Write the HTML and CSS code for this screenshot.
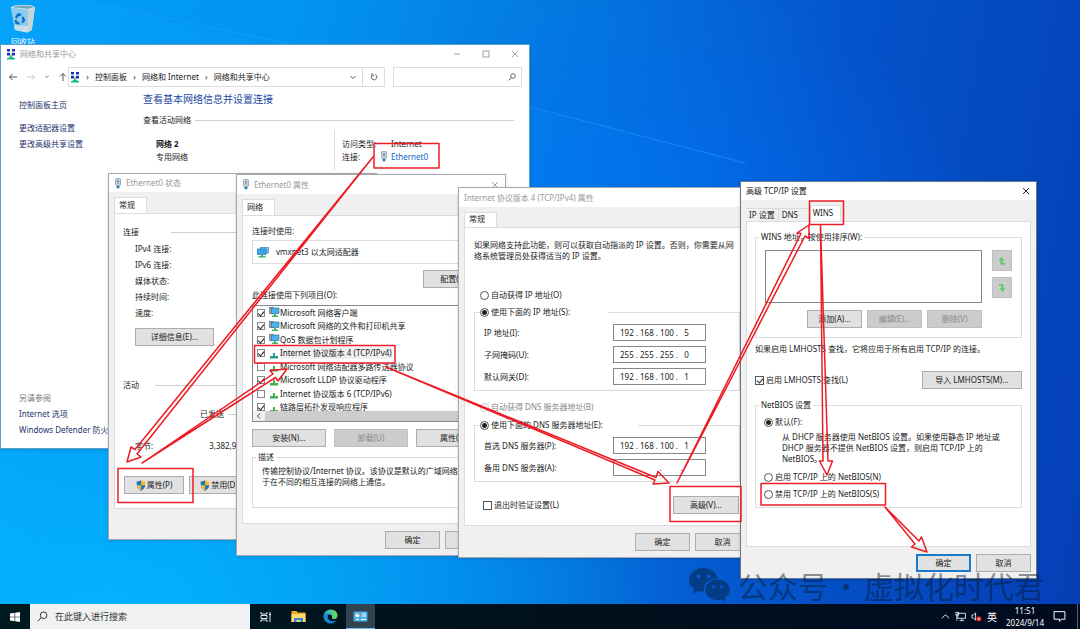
FILE: index.html
```html
<!DOCTYPE html>
<html lang="zh-CN">
<head>
<meta charset="utf-8">
<title>桌面</title>
<link rel="stylesheet" href="styles.css">
</head>
<body>
<svg class="defs" aria-hidden="true">
  <defs>
    <symbol id="i-center" viewBox="0 0 10 11">
      <g fill="#1c2fb0"><rect x="1" y="0" width="3" height="2.500"/><rect x="6" y="0" width="3" height="2.500"/><rect x="1" y="4" width="3" height="2.500"/><rect x="6" y="4" width="3" height="2.500"/></g>
      <g fill="#8fb0e8"><rect x="1" y="2.500" width="3" height="1"/><rect x="6" y="2.500" width="3" height="1"/></g>
      <path d="M5 5v4" stroke="#18b070" stroke-width="1"/><path d="M5 7l3 2h1v1.500H1V9h1z" fill="#18b978"/>
    </symbol>
    <symbol id="i-plug" viewBox="0 0 8 11">
      <rect x="1.500" y=".5" width="5" height="7" rx="1" fill="#c9d6e2" stroke="#8797a8" stroke-width=".8"/>
      <path d="M4 2v4M3 3h2" stroke="#5d7488" stroke-width=".8"/><path d="M2.500 8h3v1.500L4 10.800 2.500 9.500z" fill="#1686bd"/>
    </symbol>
    <symbol id="i-close" viewBox="0 0 8 8"><path d="M1 1l6 6M7 1L1 7" fill="none" stroke="currentColor" stroke-width=".9"/></symbol>
    <symbol id="i-pc" viewBox="0 0 12 11">
      <rect x="3.500" y=".5" width="8" height="5.500" fill="#6dc4f5" stroke="#3b7ea8" stroke-width=".7"/>
      <rect x=".5" y="2" width="8.500" height="5.500" fill="#35a7ee" stroke="#2672a6" stroke-width=".7"/>
      <path d="M4 7.500h2v1.500h2.500v1.500h-7V9H4z" fill="#3fb567"/>
    </symbol>
    <symbol id="i-client" viewBox="0 0 12 11">
      <rect x="1.500" y=".5" width="4" height="6" fill="#98a9b5" stroke="#53646f" stroke-width=".6"/>
      <rect x="3.500" y="1" width="7.500" height="5.500" fill="#4bb2f0" stroke="#2c678c" stroke-width=".6"/>
      <path d="M6 6.800h2v1.700h2v1.600H4V8.500h2z" fill="#3fb567"/>
    </symbol>
    <symbol id="i-proto" viewBox="0 0 12 11"><path d="M5 5h2v3h3v2.500H2V8h3z" fill="#43b14b"/></symbol>
    <symbol id="i-proto-on" viewBox="0 0 12 11"><path d="M5 5h2v3h3v2.500H2V8h3z" fill="#2b9a92"/></symbol>
    <symbol id="i-shield" viewBox="0 0 10 11">
      <path d="M5 .3C3.700 1.200 2 1.500.6 1.500.6 6 1.500 8.800 5 10.700z" fill="#1d74c4"/><path d="M5 .3c1.300.9 3 1.200 4.400 1.200C9.400 6 8.500 8.800 5 10.700z" fill="#f5bd2c"/>
      <path d="M.7 5.300H5v5.400C2.300 9.200 1 7.500.7 5.300z" fill="#f5bd2c"/><path d="M9.300 5.300H5v5.400c2.700-1.500 4-3.200 4.300-5.400z" fill="#1d74c4"/>
    </symbol>
  </defs>
</svg>

<main class="desktop">
  <svg class="wallpaper" viewBox="0 0 1080 604" preserveAspectRatio="none" aria-hidden="true">
    <defs>
      <linearGradient id="ray" x1="0" y1="0" x2="1" y2="0"><stop offset="0" stop-color="#0aa8ff" stop-opacity=".6"/><stop offset="1" stop-color="#0080ff" stop-opacity="0"/></linearGradient>
    </defs>
    <path d="M80 0L780 169V604H0V0z" fill="url(#ray)" opacity=".7"/>
    <path d="M80 0L300 46M500 99L745 163" stroke="#28a4ff" stroke-width="1" opacity=".5"/>
  </svg>

  <div class="shortcut">
    <svg viewBox="0 0 26 28" width="26" height="28" aria-hidden="true">
      <path d="M1 2.500L5 .8 20 .3l5 2.200-3.200 22.500-4.300 2.500L5 25z" fill="#b8dcef" opacity=".9"/>
      <path d="M1 2.500l17 1.700L17.500 27.500 5 25z" fill="#8ccaf0"/><path d="M18 4.200l7-1.700-3.200 22.500-4.300 2.500z" fill="#c9d4da"/>
      <path d="M1 2.500L5 .8 20 .3l5 2.200-7 1.700z" fill="#73a5bc" stroke="#d9edf6" stroke-width=".7"/>
      <path d="M4 20l14 1-.5 6.500L5 25z" fill="#d7e4ea" opacity=".8"/>
      <g fill="none" stroke="#0870c9" stroke-width="2.300"><path d="M6 13l2-3.500 3 .5"/><path d="M12.500 12l1.500 3.500-2 2"/><path d="M9.500 18.500l-3-.5L5.500 15"/></g>
    </svg>
    <span>回收站</span>
  </div>

  <section class="window center-window">
    <header class="titlebar"><svg class="ic-center"><use href="#i-center"/></svg><h2>网络和共享中心</h2>
      <div class="controls">
        <button aria-label="最小化"><svg viewBox="0 0 8 8"><path d="M1 4h6" stroke="currentColor" stroke-width=".9"/></svg></button>
        <button aria-label="最大化"><svg viewBox="0 0 8 8"><rect x="1" y="1" width="6" height="6" fill="none" stroke="currentColor" stroke-width=".9"/></svg></button>
        <button aria-label="关闭"><svg><use href="#i-close"/></svg></button>
      </div>
    </header>
    <nav class="navbar">
      <div class="arrows">
        <svg viewBox="0 0 10 10"><path d="M9 5H1.500M4.500 2l-3 3 3 3" fill="none" stroke="#555"/></svg>
        <svg viewBox="0 0 10 10"><path d="M1 5h7.500M5.500 2l3 3-3 3" fill="none" stroke="#ccc"/></svg>
        <svg class="small" viewBox="0 0 10 10"><path d="M2 3l3 3 3-3" fill="none" stroke="#777" stroke-width="1.600"/></svg>
        <svg viewBox="0 0 10 10"><path d="M5 9V1.500M2 4.500l3-3 3 3" fill="none" stroke="#555"/></svg>
      </div>
      <div class="address">
        <svg class="ic-center"><use href="#i-center"/></svg><i>›</i><a href="#">控制面板</a><i>›</i><a href="#">网络和 Internet</a><i>›</i><a href="#">网络和共享中心</a>
        <svg class="drop" viewBox="0 0 8 8"><path d="M1.500 3L4 5.500 6.500 3" fill="none" stroke="#555"/></svg>
        <button class="refresh" aria-label="刷新"><svg viewBox="0 0 8 8"><path d="M2.200 2A2.800 2.800 0 1 0 5.300 1.500M2 0v2.300h2.300" fill="none" stroke="#555" stroke-width=".9"/></svg></button>
      </div>
      <label class="search"><input type="text" aria-label="搜索控制面板"><svg viewBox="0 0 8 8"><circle cx="5" cy="3" r="2.300" fill="none" stroke="#555" stroke-width=".9"/><path d="M3.300 4.700L.6 7.400" stroke="#555"/></svg></label>
    </nav>
    <div class="center-body">
      <aside class="side">
        <a href="#">控制面板主页</a>
        <a href="#" class="spaced">更改适配器设置</a>
        <a href="#">更改高级共享设置</a>
        <span class="see-also">另请参阅</span>
        <a href="#">Internet 选项</a>
        <a href="#">Windows Defender 防火墙</a>
      </aside>
      <div class="overview">
        <h1>查看基本网络信息并设置连接</h1>
        <div class="rule-head">查看活动网络</div>
        <div class="network">
          <div class="net-name"><b>网络 2</b><span>专用网络</span></div>
          <div class="net-info"><span>访问类型:</span><span class="value">Internet</span><span>连接:</span><a href="#"><svg class="ic-plug"><use href="#i-plug"/></svg>Ethernet0</a></div>
        </div>
      </div>
    </div>
  </section>

  <section class="window status-window">
    <header class="titlebar"><svg class="ic-plug"><use href="#i-plug"/></svg><h2>Ethernet0 状态</h2></header>
    <div class="body">
      <div class="tabs"><button class="tab active">常规</button></div>
      <div class="panel">
        <div class="rule-head wide">连接</div>
        <div class="facts"><span>IPv4 连接:</span><span>IPv6 连接:</span><span>媒体状态:</span><span>持续时间:</span><span>速度:</span></div>
        <button class="btn details">详细信息(E)...</button>
        <div class="rule-head activity">活动</div>
        <div class="rule-head sent">已发送</div>
        <div class="bytes"><span>字节:</span><span>3,382,950</span></div>
        <div class="row actions"><button class="btn"><svg class="ic-shield"><use href="#i-shield"/></svg>属性(P)</button><button class="btn"><svg class="ic-shield"><use href="#i-shield"/></svg>禁用(D)</button></div>
      </div>
    </div>
  </section>

  <section class="window props-window">
    <header class="titlebar"><svg class="ic-plug"><use href="#i-plug"/></svg><h2>Ethernet0 属性</h2><div class="controls"><button aria-label="关闭"><svg><use href="#i-close"/></svg></button></div></header>
    <div class="body">
      <div class="tabs"><button class="tab active">网络</button></div>
      <div class="panel">
        <div>连接时使用:</div>
        <div class="adapter"><svg class="ic-row"><use href="#i-pc"/></svg>vmxnet3 以太网适配器</div>
        <button class="btn configure">配置(C)...</button>
        <div class="list-label">此连接使用下列项目(O):</div>
        <div class="listbox">
          <div class="viewport"><div class="items">
            <label><input type="checkbox" checked><svg class="ic-row"><use href="#i-client"/></svg>Microsoft 网络客户端</label>
            <label><input type="checkbox" checked><svg class="ic-row"><use href="#i-client"/></svg>Microsoft 网络的文件和打印机共享</label>
            <label><input type="checkbox" checked><svg class="ic-row"><use href="#i-client"/></svg>QoS 数据包计划程序</label>
            <label class="selected"><input type="checkbox" checked><svg class="ic-row"><use href="#i-proto-on"/></svg><span>Internet 协议版本 4 (TCP/IPv4)</span></label>
            <label><input type="checkbox"><svg class="ic-row"><use href="#i-proto"/></svg>Microsoft 网络适配器多路传送器协议</label>
            <label><input type="checkbox" checked><svg class="ic-row"><use href="#i-proto"/></svg>Microsoft LLDP 协议驱动程序</label>
            <label><input type="checkbox"><svg class="ic-row"><use href="#i-proto"/></svg>Internet 协议版本 6 (TCP/IPv6)</label>
            <label><input type="checkbox" checked><svg class="ic-row"><use href="#i-proto"/></svg>链路层拓扑发现响应程序</label>
          </div></div>
          <div class="hscroll"><svg viewBox="0 0 8 8"><path d="M5 1.500L2.500 4 5 6.500" fill="none" stroke="#444"/></svg><div class="thumb"></div></div>
        </div>
        <div class="row trio"><button class="btn">安装(N)...</button><button class="btn" disabled>卸载(U)</button><button class="btn">属性(R)</button></div>
        <fieldset class="desc"><legend>描述</legend><p>传输控制协议/Internet 协议。该协议是默认的广域网络协议，用<br>于在不同的相互连接的网络上通信。</p></fieldset>
      </div>
      <div class="row foot"><button class="btn">确定</button><button class="btn">取消</button></div>
    </div>
  </section>

  <section class="window ip-window">
    <header class="titlebar"><h2>Internet 协议版本 4 (TCP/IPv4) 属性</h2></header>
    <div class="body">
      <div class="tabs"><button class="tab active">常规</button></div>
      <div class="panel">
        <p>如果网络支持此功能，则可以获取自动指派的 IP 设置。否则，你需要从网<br>络系统管理员处获得适当的 IP 设置。</p>
        <label class="choice auto-ip"><input type="radio" name="ip">自动获得 IP 地址(O)</label>
        <fieldset class="manual-ip">
          <legend><label class="choice"><input type="radio" name="ip" checked>使用下面的 IP 地址(S):</label></legend>
          <label class="field">IP 地址(I):<input type="text" value="192 . 168 . 100 .   5"></label>
          <label class="field">子网掩码(U):<input type="text" value="255 . 255 . 255 .   0"></label>
          <label class="field">默认网关(D):<input type="text" value="192 . 168 . 100 .   1"></label>
        </fieldset>
        <label class="choice auto-dns"><input type="radio" name="dns" disabled>自动获得 DNS 服务器地址(B)</label>
        <fieldset class="manual-dns">
          <legend><label class="choice"><input type="radio" name="dns" checked>使用下面的 DNS 服务器地址(E):</label></legend>
          <label class="field">首选 DNS 服务器(P):<input type="text" value="192 . 168 . 100 .   1"></label>
          <label class="field">备用 DNS 服务器(A):<input type="text" value="        .          .         ."></label>
        </fieldset>
        <div class="row verify"><label class="choice"><input type="checkbox">退出时验证设置(L)</label><button class="btn">高级(V)...</button></div>
      </div>
      <div class="row foot"><button class="btn">确定</button><button class="btn">取消</button></div>
    </div>
  </section>

  <section class="window wins-window focused">
    <header class="titlebar"><h2>高级 TCP/IP 设置</h2><div class="controls"><button aria-label="关闭"><svg><use href="#i-close"/></svg></button></div></header>
    <div class="body">
      <div class="tabs"><button class="tab">IP 设置</button><button class="tab">DNS</button><button class="tab active">WINS</button></div>
      <div class="panel">
        <fieldset class="wins-group">
          <legend>WINS 地址，按使用排序(W):</legend>
          <div class="wins-list">
            <div class="address-list" role="listbox" aria-label="WINS 地址"></div>
            <div class="movers">
              <button aria-label="上移"><svg viewBox="0 0 10 10"><path d="M1.500 4.800L4.500 1 7.500 4.800H5.700V7H8v1.800H3.400v-4z" fill="#62cc68"/></svg></button>
              <button aria-label="下移"><svg viewBox="0 0 10 10"><path d="M2 1.200h4.600v4h1.900L5.500 9.200 2.500 5.200h1.800V3H2z" fill="#62cc68"/></svg></button>
            </div>
            <div class="row list-actions"><button class="btn">添加(A)...</button><button class="btn" disabled>编辑(E)...</button><button class="btn" disabled>删除(V)</button></div>
          </div>
        </fieldset>
        <div class="note">如果启用 LMHOSTS 查找，它将应用于所有启用 TCP/IP 的连接。</div>
        <div class="row lmhosts"><label class="choice"><input type="checkbox" checked>启用 LMHOSTS 查找(L)</label><button class="btn">导入 LMHOSTS(M)...</button></div>
        <fieldset class="netbios">
          <legend>NetBIOS 设置</legend>
          <label class="choice"><input type="radio" name="nb" checked>默认(F):</label>
          <p>从 DHCP 服务器使用 NetBIOS 设置。如果使用静态 IP 地址或<br>DHCP 服务器不提供 NetBIOS 设置，则启用 TCP/IP 上的<br>NetBIOS。</p>
          <label class="choice"><input type="radio" name="nb">启用 TCP/IP 上的 NetBIOS(N)</label>
          <label class="choice last"><input type="radio" name="nb">禁用 TCP/IP 上的 NetBIOS(S)</label>
        </fieldset>
      </div>
      <div class="row foot"><button class="btn primary">确定</button><button class="btn">取消</button></div>
    </div>
  </section>

  <div class="brand">
    <svg viewBox="0 0 42 35" aria-hidden="true"><path fill-rule="evenodd" d="M15.500 1C7 1 1 6.300 1 13c0 3.800 2 7 5.200 9.200L4.800 26.800l5.200-2.700c1.800.6 3.500.8 5.800.8C14.500 17 20.500 11.500 29.700 11.500 28.500 5.500 23 1 15.500 1zM10.500 7.500a1.900 1.900 0 1 1 0 3.800 1.900 1.900 0 0 1 0-3.800zm10 0a1.900 1.900 0 1 1 0 3.800 1.900 1.900 0 0 1 0-3.800z"/><path fill-rule="evenodd" d="M29.500 12.500c-7 0-12.300 4.600-12.300 10.300s5.300 10.300 12.300 10.300c1.500 0 3-.2 4.300-.6l4 2.100-1.100-3.600c3-1.900 4.900-4.800 4.900-8.200 0-5.700-5.100-10.300-12.100-10.300zM25.500 18a1.600 1.600 0 1 1 0 3.200 1.600 1.600 0 0 1 0-3.200zm8 0a1.600 1.600 0 1 1 0 3.200 1.600 1.600 0 0 1 0-3.200z"/></svg>
    <span>公众号</span><span class="dot">·</span><span>虚拟化时代君</span>
  </div>

  <svg class="markup" viewBox="0 0 1080 629" width="1080" height="629" aria-hidden="true">
    <g fill="none" stroke="#ed1c24" stroke-width="1.500" stroke-linejoin="round">
      <rect x="374" y="143.500" width="65" height="24.500"/><rect x="118" y="468.500" width="75" height="34"/><rect x="254.500" y="345.500" width="140.500" height="17.500"/><rect x="670" y="486.500" width="71" height="35"/><rect x="809.500" y="201" width="34" height="23.500"/><rect x="761" y="483.500" width="124.500" height="21.500"/>
      <path d="M373 157L135 449.500 131 447 127 462 141 457 137 454z"/>
      <path d="M142 463L273 374 270 370.500 287 369 278 381 275.500 377.500z"/>
      <path d="M386 367L656 477.500 658 471.500 669 483 653 484 655 480z"/>
      <path d="M677 483L801 233.500 797 233 809 225 809 238.500 805 236z"/>
      <path d="M820.500 225L823 461 819.500 461 827 475 832.500 461 828 461z"/>
      <path d="M885 507L919 541 921.500 537 927 552 911.500 547 915 544z"/>
    </g>
  </svg>
</main>

<footer class="taskbar">
  <button class="start" aria-label="开始"><svg viewBox="0 0 10 10"><path d="M0 1.400L4.600.8v3.900H0zM5.200.7L10 0v4.700H5.200zM0 5.300h4.600v3.900L0 8.600zM5.200 5.300H10V10l-4.800-.7z" fill="#fff"/></svg></button>
  <label class="task-search"><svg viewBox="0 0 12 12"><circle cx="7.200" cy="4.600" r="3.600" fill="none" stroke="#222"/><path d="M4.600 7.200L1 11" stroke="#222"/></svg><input type="text" placeholder="在此键入进行搜索" aria-label="搜索"></label>
  <div class="apps">
    <button aria-label="任务视图"><svg viewBox="0 0 12 12"><path d="M1 1v2h6V1M1 11V9h6v2M1 4.500h6v3H1zM10 1v10M9 3.500h2" fill="none" stroke="#fff" stroke-width=".9"/></svg></button>
    <button aria-label="文件资源管理器"><svg class="app-lg" viewBox="0 0 15 13"><path d="M.5 1h5l1.200 1.500h7.800V12H.5z" fill="#e9a825"/><path d="M.5 4h14v8H.5z" fill="#ffd867"/><path d="M3 12V8h9v4h-2.500v-2h-4v2z" fill="#3089d8"/></svg></button>
    <button aria-label="Microsoft Edge"><svg class="app-lg" viewBox="0 0 16 16"><defs><linearGradient id="eg" x1="0" x2="1"><stop offset="0" stop-color="#20a5e8"/><stop offset="1" stop-color="#6be04e"/></linearGradient></defs><path d="M.5 7.500C1 3.300 4.200.5 8.200.5c4.400 0 7.300 3 7.300 6.300 0 2.400-1.700 3.900-4 3.900-1.500 0-2.300-.6-2.100-1.200.9-1.400.2-3.700-2.300-3.700C4.500 5.700 1.500 6 .5 7.500z" fill="url(#eg)"/><path d="M.5 8C.5 5.800 4 4.500 6.500 5c-2.300 1.500-2 7 3 8 2 .3 4-.5 5-1.200-1.500 2.500-3.700 3.700-6.400 3.700C3.900 15.500.5 12.300.5 8z" fill="#1686d9"/></svg></button>
    <button class="running" aria-label="控制面板"><svg class="app-lg" viewBox="0 0 15 12"><rect x=".5" y="1" width="14" height="10" rx="1" fill="#48aeea"/><circle cx="4.500" cy="4.700" r="2" fill="#fff"/><path d="M4.500 4.700V2.500a2.200 2.200 0 0 1 2 2.200z" fill="#f7a928"/><path d="M9 3.500h4M9 5.500h4M3 9h3M8 9h5" stroke="#fff"/></svg></button>
  </div>
  <div class="tray">
    <svg viewBox="0 0 10 10"><path d="M1 7l4-4 4 4" fill="none" stroke="#fff"/></svg>
    <svg viewBox="0 0 12 12" class="tray-net"><path d="M3 2.500h8.500V8H3zM7.300 8v2.500M5 10.500h5M1 1.500h3v3H1zM2 4.500v6" fill="none" stroke="#fff" stroke-width=".9"/></svg>
    <svg viewBox="0 0 12 12" class="tray-net"><path d="M1 4.500h1.500L5 2v8L2.500 7.500H1z" fill="none" stroke="#fff" stroke-width=".9"/><circle cx="8.500" cy="8.500" r="2.900" fill="#d9262d"/><path d="M7.500 7.500l2 2M9.500 7.500l-2 2" stroke="#fff" stroke-width=".8"/></svg>
    <span class="ime">英</span>
    <time><span>11:51</span><span>2024/9/14</span></time>
    <button aria-label="通知"><svg viewBox="0 0 12 12"><path d="M1 1.500h10v7H7.500L6 10.500v-2H1z" fill="none" stroke="#fff" stroke-width=".9"/></svg></button>
  </div>
  <button class="show-desktop" aria-label="显示桌面"></button>
</footer>
</body>
</html>
```

FILE: styles.css
```css
* { box-sizing: border-box; }
body {
  margin: 0;
  min-height: 100vh;
  display: flex;
  flex-direction: column;
  overflow: hidden;
  font-family: "Noto Sans", "Noto Sans CJK SC", sans-serif;
  font-size: 8px;
  line-height: 12px;
  color: #1a1a1a;
}
button, input { font: inherit; color: inherit; }
a { color: inherit; text-decoration: none; }
h1, h2, p { margin: 0; font-weight: 400; }
i { font-style: normal; }
svg { flex: none; display: block; }
.defs { position: absolute; width: 0; height: 0; }
.row { display: flex; align-items: center; }

/* Desktop */
.desktop {
  position: relative;
  flex: 1;
  background:
    radial-gradient(ellipse 560px 260px at 10% 100%, rgba(0, 196, 255, .8), rgba(0, 180, 255, 0)),
    radial-gradient(ellipse 330px 260px at 60% 40%, rgba(0, 115, 255, .6), rgba(0, 100, 255, 0)),
    linear-gradient(100deg, #029ff6 0%, #0295f0 25%, #0472dc 52%, #0454cb 72%, #053fb6 100%);
}
.wallpaper { position: absolute; inset: 0; width: 100%; height: 100%; }
.shortcut {
  position: absolute;
  left: 0;
  top: 5px;
  width: 46px;
  display: flex;
  flex-direction: column;
  align-items: center;
  gap: 3px;
  color: #fff;
}

/* Windows */
.window {
  position: absolute;
  display: flex;
  flex-direction: column;
  background: #f0f0f0;
  border: 1px solid #a5a9ad;
  box-shadow: 0 1px 3px rgba(0, 0, 0, .15);
  white-space: nowrap;
  overflow: hidden;
}
.titlebar {
  display: flex;
  align-items: center;
  gap: 4px;
  height: 19px;
  padding: 0 6px 0 5px;
  background: #fff;
  color: #999;
}
.titlebar h2 { font-size: 8px; }
.focused { border-color: #66788a; }
.focused .titlebar { color: #111; }
.controls { margin-left: auto; display: flex; gap: 21px; }
.controls button { border: 0; padding: 0; background: none; }
.controls svg { width: 8px; height: 8px; }
.ic-center { width: 10px; height: 11px; }
.ic-plug { width: 8px; height: 11px; }
.ic-row { width: 12px; height: 11px; }
.ic-shield { width: 10px; height: 11px; }

.body { flex: 1; display: flex; flex-direction: column; padding: 5px 5px 6px; }
.tabs { display: flex; align-items: flex-end; }
.tab {
  height: 13px;
  padding: 0 3px;
  border: 1px solid #dcdcdc;
  border-width: 1px 1px 0 0;
  background: #f0f0f0;
  line-height: 12px;
}
.tab.active { height: 16px; padding: 0 11px 2px 4px; background: #fff; border-left-width: 1px; }
.panel {
  flex: 1;
  display: flex;
  flex-direction: column;
  padding: 9px;
  background: #fff;
  border: 1px solid #dcdcdc;
}
.btn {
  height: 18px;
  min-width: 55px;
  padding: 0 4px;
  display: inline-flex;
  justify-content: center;
  align-items: center;
  gap: 1px;
  background: #e1e1e1;
  border: 1px solid #adadad;
  line-height: 12px;
}
.btn:disabled { background: #ccc; border-color: #bfbfbf; color: #8b8b8b; }
.btn.primary { border: 2px solid #1979ca; }
.foot { justify-content: flex-end; gap: 5px; padding-top: 7px; }
.window p { line-height: 11px; }

fieldset { margin: 0; padding: 0; border: 1px solid #dcdcdc; min-width: 0; }
legend { margin-left: 3px; padding: 0 2px; line-height: 12px; }
.choice { display: flex; align-items: center; gap: 2px; }
input[type="radio"], input[type="checkbox"] {
  appearance: none;
  flex: none;
  width: 9px;
  height: 9px;
  margin: 0;
  border: 1px solid #555;
  background: #fff;
}
input[type="radio"] { border-radius: 50%; }
input[type="radio"]:checked { background: radial-gradient(circle, #222 0 2px, #fff 3px); }
input[type="radio"]:disabled { border-color: #ccc; }
input[type="checkbox"]:checked { position: relative; }
input[type="checkbox"]:checked::after {
  content: "";
  position: absolute;
  left: 2px;
  top: 0;
  width: 3px;
  height: 5px;
  border: solid #222;
  border-width: 0 1px 1px 0;
  transform: rotate(40deg);
}
.rule-head { display: flex; align-items: center; gap: 4px; }
.rule-head::after { content: ""; flex: 1; height: 1px; background: #d0d0d0; }

/* Network and sharing centre */
.center-window { left: 0; top: 44px; width: 530px; min-height: 405px; background: #fff; border-color: #5ba0cc; }
.center-window .titlebar { height: 18px; padding-right: 10px; }
.navbar { display: flex; align-items: center; padding: 4px 7px 0; }
.arrows { display: flex; align-items: center; gap: 8px; width: 60px; }
.arrows svg { width: 10px; height: 10px; }
.arrows .small { width: 6px; height: 6px; }
.address { flex: 1; height: 20px; display: flex; align-items: center; gap: 5px; padding-left: 1px; border: 1px solid #dcdcdc; }
.address i { width: 5px; text-align: center; }
.drop { width: 8px; height: 8px; margin-left: auto; }
.refresh { align-self: stretch; width: 22px; display: grid; place-items: center; padding: 0; border: 0; border-left: 1px solid #dcdcdc; background: none; }
.refresh svg { width: 8px; height: 8px; }
.search { width: 129px; height: 20px; margin-left: 8px; padding-right: 5px; display: flex; align-items: center; border: 1px solid #dcdcdc; }
.search input { flex: 1; min-width: 0; border: 0; padding: 0; }
.search svg { width: 8px; height: 8px; }
.center-body { flex: 1; display: grid; grid-template-columns: 142px 1fr; }
.side { display: flex; flex-direction: column; gap: 4px; padding: 12px 0 12px 18px; color: #26336e; }
.side .spaced { margin-top: 7px; }
.see-also { margin-top: auto; color: #777; }
.overview { padding: 4px 15px 0 0; }
.overview h1 { font-size: 10px; line-height: 16px; color: #1a47a3; margin-bottom: 7px; }
.network { display: grid; grid-template-columns: 192px 1fr; margin-top: 4px; line-height: 13px; }
.net-name { display: flex; flex-direction: column; padding: 7px 0 7px 13px; border-right: 1px solid #dcdcdc; }
.net-info { display: grid; grid-template-columns: 38px 1fr; padding: 7px 0 7px 7px; }
.net-info .value { padding-left: 11px; }
.net-info a { display: flex; align-items: center; gap: 3px; color: #1068cc; }

/* Ethernet status */
.status-window { left: 108px; top: 173px; width: 269px; min-height: 367px; }
.status-window .titlebar { height: 18px; }
.status-window .panel { padding: 12px 8px; flex: none; min-height: 296px; }
.rule-head.wide { gap: 32px; }
.facts { display: flex; flex-direction: column; margin: 3px 0 7px 12px; line-height: 16px; }
.details { width: 79px; margin-left: 12px; }
.activity { margin-top: 33px; gap: 16px; }
.sent { margin: 17px 0 0 77px; }
.bytes { display: flex; gap: 56px; margin: 20px 0 0 12px; }
.actions { margin: 24px 0 0 1px; gap: 5px; }
.actions .btn { width: 60px; }

/* Ethernet properties */
.props-window { left: 236px; top: 174px; width: 270px; min-height: 382px; }
.adapter { height: 24px; margin: 3px 0 6px; display: flex; align-items: center; gap: 7px; padding-left: 4px; border: 1px solid #dcdcdc; }
.configure { width: 67px; align-self: flex-end; }
.list-label { margin: 1px 0 4px; }
.listbox { border: 1px solid #828790; overflow: hidden; }
.viewport { height: 105px; overflow: hidden; }
.items { height: 108px; display: grid; grid-template-rows: repeat(8, 1fr); }
.items label { display: flex; align-items: center; padding-left: 4px; }
.items input { width: 8px; height: 8px; margin-right: 3px; border-color: #888; }
.items input:checked::after { left: 1px; }
.items .selected span { background: #f0f0f0; }
.hscroll { display: flex; align-items: center; height: 10px; background: #f0f0f0; }
.hscroll svg { width: 8px; height: 8px; margin: 0 2px; }
.thumb { flex: 1; height: 10px; background: #cdcdcd; }
.trio { gap: 8px; margin: 7px 0 4px; }
.trio .btn { flex: 1; }
.desc p { padding: 2px 9px 20px; }

/* IPv4 properties */
.ip-window { left: 458px; top: 187px; width: 298px; min-height: 371px; }
.ip-window .tab.active { height: 15px; }
.ip-window .panel { padding: 11px 9px 10px; }
.auto-ip { margin: 28px 0 5px 6px; }
.ip-window fieldset { padding: 6px 33px 5px 9px; }
.ip-window legend { width: 128px; margin-left: -4px; padding: 0; }
.ip-window .manual-dns legend { width: 158px; }
.field { display: flex; justify-content: space-between; align-items: center; height: 17px; margin-bottom: 5px; }
.field:last-child { margin-bottom: 0; }
.field input { width: 93px; height: 17px; padding: 0 6px; border: 1px solid #888; background: #fff; }
.auto-dns { margin: 10px 0 6px 6px; color: #888; }
.verify { justify-content: space-between; padding: 14px 0 0 9px; margin-right: 1px; }
.verify .btn { width: 66px; }

/* Advanced TCP/IP */
.wins-window { left: 740px; top: 181px; width: 297px; min-height: 398px; }
.wins-window .titlebar { height: 18px; }
.wins-window .panel { padding: 9px 8px 8px; }
.wins-window .tab:nth-child(2) { width: 31px; text-align: left; }
.wins-window .tab.active { padding: 0 7px 2px 2px; }
.wins-list { display: grid; grid-template-columns: 1fr 20px; gap: 7px 10px; padding: 7px 9px 9px; }
.address-list { height: 53px; border: 1px solid #828790; }
.movers { display: flex; flex-direction: column; justify-content: space-between; padding-bottom: 5px; }
.movers button { width: 20px; height: 21px; padding: 0; display: grid; place-items: center; border: 1px solid #bfbfbf; background: #ccc; }
.movers svg { width: 10px; height: 10px; }
.list-actions { justify-content: flex-end; gap: 5px; }
.note { margin: 5px 0 16px; }
.lmhosts { justify-content: space-between; margin-bottom: 10px; }
.lmhosts .btn { width: 100px; }
.netbios { padding: 5px 8px 7px; }
.netbios legend { margin-left: -5px; }
.netbios p { margin: 3px 0 7px 18px; }
.netbios .last { margin-top: 5px; }

/* Overlays */
.brand { position: absolute; left: 688px; top: 567px; display: flex; align-items: center; font-family: "Noto Sans CJK SC", sans-serif; font-size: 30px; line-height: 32px; color: #06182e; opacity: .45; white-space: nowrap; }
.brand svg { width: 42px; height: 35px; margin-right: 8px; fill: currentColor; }
.brand .dot { width: 36px; text-align: center; }
.markup { position: absolute; left: 0; top: 0; pointer-events: none; }

/* Taskbar */
.taskbar { display: flex; align-items: stretch; height: 25px; background: linear-gradient(90deg, #001a22, #00101c 55%, #000b20); color: #fff; }
.taskbar button { display: grid; place-items: center; padding: 0; border: 0; background: none; }
.taskbar .start { width: 30px; }
.start svg { width: 10px; height: 10px; }
.task-search { width: 220px; display: flex; align-items: center; gap: 7px; padding-left: 7px; background: #f0f1f2; color: #222; }
.task-search svg { width: 11px; height: 11px; }
.task-search input { flex: 1; min-width: 0; padding: 0; border: 0; background: none; font-size: 9px; }
.task-search input::placeholder { color: #333; opacity: 1; }
.apps { display: flex; }
.taskbar .apps button { width: 32px; }
.apps svg { width: 12px; height: 12px; }
.apps .app-lg { width: 15px; height: 15px; }
.taskbar .apps .running { width: 29px; background: #30444f; border-bottom: 1px solid #76b9ed; }
.tray { margin-left: auto; display: flex; align-items: center; gap: 5px; padding-right: 11px; }
.tray svg { width: 9px; height: 9px; }
.tray .tray-net { width: 11px; height: 11px; }
.ime { font-size: 10px; }
.tray time { width: 46px; display: flex; flex-direction: column; align-items: center; }
.tray button svg { width: 13px; height: 13px; }
.taskbar .show-desktop { width: 3px; border-left: 1px solid #56636e; }
```
